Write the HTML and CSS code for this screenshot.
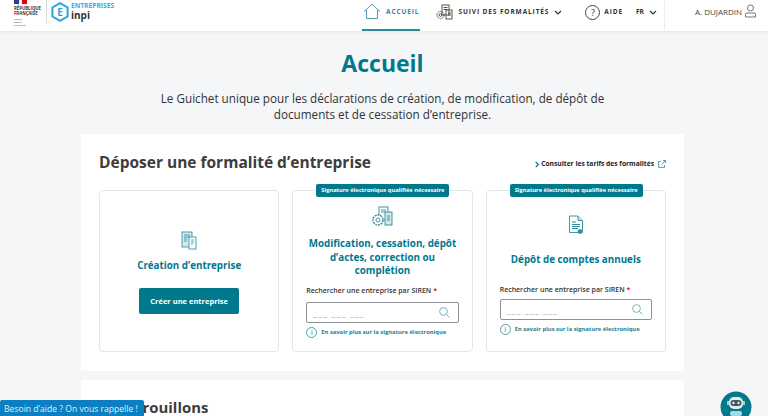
FILE: index.html
```html
<!DOCTYPE html>
<html lang="fr">
<head>
  <meta charset="UTF-8">
  <meta name="viewport" content="width=device-width, initial-scale=1.0">
  <title>Accueil</title>
  <link rel="stylesheet" href="styles.css">
</head>
<body>
  <header class="topbar">
    <div class="brand">
      <div class="marianne">
        <svg class="flag" width="13" height="4" viewBox="0 0 13 4"><rect width="5" height="4" fill="#2b3f8c"/><rect x="5" width="3" height="4" fill="#eee"/><rect x="8" width="5" height="4" fill="#e1000f"/></svg>
        <div class="rf">RÉPUBLIQUE<br>FRANÇAISE</div>
        <div class="devise">Liberté<br>Égalité<br>Fraternité</div>
      </div>
      <div class="brand-sep"></div>
      <svg class="hexa" width="18" height="20" viewBox="0 0 18 20"><path d="M9 1.2 16.6 5.5v9L9 18.8 1.4 14.5v-9z" fill="none" stroke="#29a3e0" stroke-width="2"/><text x="9" y="13.6" text-anchor="middle" class="hexa-e">E</text></svg>
      <div class="brand-name">
        <span class="ent">ENTREPRISES</span>
        <span class="inpi">inpi</span>
      </div>
    </div>
    <nav class="nav">
      <a class="nav-item active">
        <svg width="18" height="17" viewBox="0 0 18 17" fill="none" stroke="#4f9fae" stroke-width="1"><path d="M1 8.5 9 1.2l8 7.3M3.5 7v8.5h11V7"/></svg>
        <span>ACCUEIL</span>
      </a>
      <a class="nav-item suivi">
        <svg width="18" height="17" viewBox="0 0 18 17" fill="none" stroke="#444" stroke-width=".9"><rect x="7" y="1" width="7" height="10"/><rect x="11" y="6" width="6" height="9"/><circle cx="5.5" cy="11" r="3.6" stroke-dasharray="1.6 .7"/><circle cx="5.5" cy="11" r="1.4"/><path d="M8.5 3.5h4M8.5 5.5h4M13 9h3M13 11h3"/></svg>
        <span>SUIVI DES FORMALITÉS</span>
        <svg class="chev" width="8" height="5" viewBox="0 0 8 5" fill="none" stroke="#333" stroke-width="1.2"><path d="M1 1l3 3 3-3"/></svg>
      </a>
      <a class="nav-item aide">
        <span class="qmark">?</span>
        <span>AIDE</span>
      </a>
      <a class="nav-item lang">
        <span>FR</span>
        <svg class="chev" width="8" height="5" viewBox="0 0 8 5" fill="none" stroke="#333" stroke-width="1.2"><path d="M1 1l3 3 3-3"/></svg>
      </a>
      <a class="user">
        <span>A. DUJARDIN</span>
        <svg width="11" height="14" viewBox="0 0 11 14" fill="none" stroke="#666" stroke-width=".9"><circle cx="5.5" cy="4" r="3"/><path d="M1 9h9l.5 1.5V13H.5v-2.5z"/></svg>
      </a>
    </nav>
  </header>

  <main class="page">
    <h1>Accueil</h1>
    <p class="intro">Le Guichet unique pour les déclarations de création, de modification, de dépôt de<br>documents et de cessation d’entreprise.</p>

    <section class="panel">
      <div class="panel-head">
        <h2>Déposer une formalité d’entreprise</h2>
        <a class="tarifs">
          <svg width="4" height="7" viewBox="0 0 4 7" fill="none" stroke="#00798c" stroke-width="1.2"><path d="M.7.8 3.3 3.5.7 6.2"/></svg>
          Consulter les tarifs des formalités
          <svg class="ext" width="8" height="8" viewBox="0 0 8 8" fill="none" stroke="#3a93a3" stroke-width=".9"><path d="M3 1.5H.6v5.9h5.9V5M3.5 4.5 7.4.6M5 .5h2.5V3"/></svg>
        </a>
      </div>

      <div class="cards">
        <article class="card card-first">
          <svg class="icon" width="17" height="19" viewBox="0 0 17 19" fill="none" stroke="#3a93a3" stroke-width=".9"><rect x="1" y="1" width="10" height="15" fill="#d5e8ec"/><rect x="8" y="6" width="7" height="12" fill="#fff"/><path d="M3 4h6M3 6h6M3 8h3M3 10h3M10 9h3M10 11h3M10 13h2"/></svg>
          <h3>Création d’entreprise</h3>
          <a class="btn">Créer une entreprise</a>
        </article>

        <article class="card card-second">
          <span class="badge">Signature électronique qualifiée nécessaire</span>
          <svg class="icon" width="24" height="22" viewBox="0 0 24 22" fill="none" stroke="#2f8c9c" stroke-width=".9"><rect x="9" y="1" width="9" height="13" fill="#fff"/><rect x="15" y="6" width="7" height="13" fill="#d5e8ec"/><circle cx="8" cy="14" r="5" fill="#fff" stroke-dasharray="2 .8" stroke-width="1.4"/><circle cx="8" cy="14" r="2"/><path d="M11 4h5M11 6h5M17 10h3M17 12h3M17 14h3"/></svg>
          <h3>Modification, cessation, dépôt d’actes, correction ou complétion</h3>
          <label class="siren-label">Rechercher une entreprise par SIREN <em>*</em></label>
          <div class="siren-input">
            <span>___ ___ ___</span>
            <svg width="11" height="11" viewBox="0 0 11 11" fill="none" stroke="#6aa9b6" stroke-width=".9"><circle cx="4.5" cy="4.5" r="3.9"/><path d="M7.4 7.4 10.5 10.5"/></svg>
          </div>
          <a class="info"><span class="info-i">i</span>En savoir plus sur la signature électronique</a>
        </article>

        <article class="card card-third">
          <span class="badge">Signature électronique qualifiée nécessaire</span>
          <svg class="icon" width="16" height="20" viewBox="0 0 16 20" fill="none" stroke="#2f8c9c" stroke-width=".9"><path d="M1.5 1H10l4.5 4.5v12h-13z" fill="#fff"/><path d="M10 1v4.500h4.500" fill="#d5e8ec"/><path d="M4 7h4M4 9.500h8M4 11.500h8M4 13.500h6" stroke-width="1.1"/><circle cx="12" cy="16.5" r="2" fill="#2f8c9c"/></svg>
          <h3>Dépôt de comptes annuels</h3>
          <label class="siren-label">Rechercher une entreprise par SIREN <em>*</em></label>
          <div class="siren-input">
            <span>___ ___ ___</span>
            <svg width="11" height="11" viewBox="0 0 11 11" fill="none" stroke="#6aa9b6" stroke-width=".9"><circle cx="4.5" cy="4.5" r="3.9"/><path d="M7.4 7.4 10.5 10.5"/></svg>
          </div>
          <a class="info"><span class="info-i">i</span>En savoir plus sur la signature électronique</a>
        </article>
      </div>
    </section>

    <section class="panel panel-drafts">
      <h2>Mes brouillons</h2>
    </section>
  </main>

  <a class="callback">Besoin d’aide ? On vous rappelle !</a>
  <div class="bot">
    <svg width="32" height="25" viewBox="0 0 32 25"><circle cx="16" cy="16" r="15.5" fill="#05798c"/><rect x="9" y="6" width="14" height="12" rx="5" fill="#dfeef1"/><rect x="10.5" y="9" width="11" height="6" rx="3" fill="#4a5560"/><circle cx="13.5" cy="12" r="1.2" fill="#cfe"/><circle cx="18.5" cy="12" r="1.2" fill="#cfe"/><rect x="7" y="10" width="2" height="4" fill="#9cc"/><rect x="23" y="10" width="2" height="4" fill="#9cc"/><rect x="10" y="20" width="12" height="5" rx="2" fill="#9fdbe6"/></svg>
  </div>
</body>
</html>
```

FILE: styles.css
```css
html,
body {
  margin: 0;
  padding: 0;
  height: 416px;
  overflow: hidden;
}
body {
  font-family: "Open Sans", "Noto Sans", sans-serif;
  background-color: #f5f6f8;
  color: #333;
}
a {
  color: inherit;
  text-decoration: none;
}

/* header */
.topbar {
  display: flex;
  justify-content: space-between;
  height: 31px;
  background-color: #fff;
  box-shadow: 0 1px 3px rgba(0, 0, 0, 0.08);
}
.brand {
  display: flex;
  align-items: flex-start;
  padding-left: 14px;
}
.marianne {
  width: 32px;
  color: #333;
}
.flag {
  display: block;
}
.rf {
  font-size: 4.3px;
  line-height: 5px;
  font-weight: 700;
  margin-top: 2px;
  white-space: nowrap;
}
.devise {
  font-size: 2.5px;
  line-height: 3px;
  margin-top: 2px;
}
.brand-sep {
  width: 1px;
  height: 24px;
  background-color: #ddd;
  margin-right: 4px;
}
.hexa {
  margin-top: 2px;
}
.hexa-e {
  font-family: "Open Sans", sans-serif;
  font-size: 10px;
  font-weight: 700;
  fill: #29a3e0;
}
.brand-name {
  display: flex;
  flex-direction: column;
  margin-left: 2px;
  margin-top: 2px;
}
.ent {
  font-size: 6.7px;
  line-height: 8px;
  font-weight: 700;
  color: #3aa9e6;
}
.inpi {
  font-size: 10px;
  line-height: 11px;
  font-weight: 700;
  color: #333;
}
.nav {
  display: flex;
  align-items: flex-start;
  padding-right: 12px;
}
.nav-item {
  display: flex;
  align-items: center;
  height: 30px;
  font-size: 6.5px;
  font-weight: 700;
  letter-spacing: 0.9px;
  color: #333;
  gap: 5px;
}
.nav-item svg {
  margin-top: -6px;
}
.nav-item span {
  margin-top: -7px;
}
.nav-item .chev {
  margin-top: -6px;
}
.active {
  color: #2c8a9b;
  border-bottom: 2px solid #2c8a9b;
  padding: 0 1px;
  height: 29px;
  margin-right: 15px;
}
.suivi {
  margin-right: 23px;
}
.aide {
  margin-right: 13px;
  gap: 4px;
}
.qmark {
  display: block;
  width: 13px;
  height: 13px;
  border: 1px solid #444;
  border-radius: 50%;
  text-align: center;
  font-size: 9px;
  line-height: 13px;
  font-weight: 400;
  letter-spacing: 0;
}
.nav-item .qmark {
  margin-top: -6px;
}
.lang {
  padding-right: 7px;
  border-right: 1px solid #eee;
  gap: 5px;
  letter-spacing: 0;
}
.user {
  display: flex;
  gap: 3px;
  align-items: center;
  height: 22px;
  margin-left: 30px;
  font-size: 8px;
  color: #444;
}

/* main */
.page {
  width: 603px;
  margin-left: 81px;
}
h1 {
  margin: 17px 0 0;
  text-align: center;
  font-size: 23px;
  line-height: 30px;
  font-weight: 700;
  color: #00798c;
}
.intro {
  margin: 12px 0 0;
  text-align: center;
  font-size: 11.7px;
  line-height: 16px;
  color: #333;
}
.panel {
  background-color: #fff;
  margin-top: 12px;
  padding: 17px 18px 19px;
}
.panel-head {
  display: flex;
  justify-content: space-between;
  align-items: flex-start;
}
h2 {
  margin: 0;
  font-size: 15.5px;
  line-height: 22px;
  font-weight: 700;
  color: #3c3c3c;
}
.tarifs {
  display: flex;
  align-items: center;
  gap: 2px;
  font-size: 6.7px;
  font-weight: 700;
  line-height: 10px;
  color: #222;
  margin-top: 8px;
}
.ext {
  margin-left: 2px;
}
.cards {
  display: flex;
  gap: 13px;
  margin-top: 17px;
}
.card {
  position: relative;
  display: flex;
  flex-direction: column;
  box-sizing: border-box;
  width: 181px;
  height: 162px;
  border: 1px solid #e3e6e8;
  border-radius: 4px;
  padding: 15px 13px 0;
  background-color: #fff;
}
.icon {
  align-self: center;
  flex-shrink: 0;
}
h3 {
  margin: 9px 0 0;
  text-align: center;
  font-size: 9.8px;
  line-height: 13.5px;
  font-weight: 700;
  color: #00798c;
}
.badge {
  position: absolute;
  top: -7px;
  left: 23px;
  padding: 0 5px;
  height: 13px;
  line-height: 13px;
  background-color: #00798c;
  border-radius: 2px;
  color: #fff;
  font-size: 5.7px;
  font-weight: 700;
  white-space: nowrap;
}
.card-first {
  align-items: center;
  padding-top: 40px;
}
.btn {
  margin-top: 15px;
  background-color: #00798c;
  color: #fff;
  font-size: 7.5px;
  font-weight: 700;
  line-height: 26px;
  padding: 0 11px;
  border-radius: 2px;
}
.siren-label {
  margin-top: 8px;
  font-size: 7px;
  line-height: 10px;
  font-weight: 600;
  color: #333;
}
.siren-label em {
  color: #e1000f;
  font-style: normal;
}
.siren-input {
  display: flex;
  justify-content: space-between;
  align-items: center;
  height: 19px;
  margin-top: 6px;
  padding: 0 8px 0 6px;
  border: 1px solid #8d9195;
  border-radius: 2px;
  font-size: 9px;
  color: #aaaeb2;
  letter-spacing: 1px;
}
.info {
  display: flex;
  align-items: center;
  gap: 4px;
  margin-top: 4px;
  font-size: 5.8px;
  font-weight: 700;
  color: #1e8090;
}
.info-i {
  display: block;
  flex-shrink: 0;
  width: 11px;
  height: 11px;
  box-sizing: border-box;
  border: 1px solid #4f9fae;
  border-radius: 50%;
  text-align: center;
  font-size: 7px;
  line-height: 9px;
  font-weight: 400;
}
.card-third .icon {
  margin-top: 9px;
}
.card-third h3 {
  margin-top: 18px;
}
.card-third .siren-label {
  margin-top: 18px;
}
.card-third .siren-input {
  margin-top: 4px;
}
.panel-drafts {
  box-sizing: border-box;
  margin-top: 9px;
  height: 36px;
  padding: 18px 18px 0;
}
.panel-drafts h2 {
  font-size: 14.9px;
  line-height: 18px;
}

/* floating */
.callback {
  position: fixed;
  left: 0;
  bottom: 0;
  width: 144px;
  height: 16px;
  padding-left: 4px;
  box-sizing: border-box;
  background-color: #0b7fc1;
  border-radius: 2px 2px 0 0;
  color: #dff0fa;
  font-size: 8.6px;
  line-height: 19px;
  white-space: nowrap;
  overflow: hidden;
}
.bot {
  position: fixed;
  left: 720px;
  bottom: 0;
  width: 32px;
  height: 25px;
  line-height: 0;
}
```
